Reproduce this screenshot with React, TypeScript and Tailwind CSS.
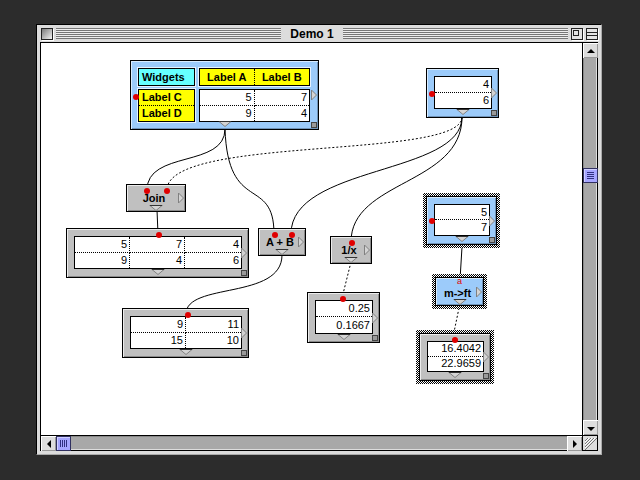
import React from "react";
import clsx from "clsx";

const sans = "font-['Liberation_Sans',Arial,sans-serif]";

function Dot({ pos }: { pos: string }) {
  return <span className={clsx("absolute w-[6px] h-[6px] rounded-full bg-[#e00000]", pos)} />;
}

function RightTab() {
  return (
    <svg width="6" height="11" viewBox="0 0 6 11" className="absolute right-[1px] top-1/2 -translate-y-1/2">
      <path d="M0.5 0.5 L5.5 5.5 L0.5 10.5 Z" fill="#d4d4d4" stroke="#808080" />
    </svg>
  );
}

function DownTab({ pos = "bottom-[2px]" }: { pos?: string }) {
  return (
    <svg width="13" height="6" viewBox="0 0 13 6" className={clsx("absolute left-1/2 -translate-x-1/2", pos)}>
      <path d="M0.5 0.5 L12.5 0.5 L6.5 5.5 Z" fill="#d4d4d4" stroke="#808080" />
      <path d="M0 0.5 H13" stroke="#333" />
    </svg>
  );
}

function Grow() {
  return <span className="absolute right-[1px] bottom-[1px] w-[6px] h-[6px] border border-[#444] bg-[#9a9a9a]" />;
}

function Frame({
  pos,
  tone,
  selected,
  children,
}: {
  pos: string;
  tone: "blue" | "gray";
  selected?: boolean;
  children: React.ReactNode;
}) {
  const body = (
    <div
      className={clsx(
        "relative w-full h-full border border-black flex flex-col",
        tone === "blue"
          ? "bg-[#9ccbfa] shadow-[inset_1px_1px_0_#d8ecff,inset_-1px_-1px_0_#6f93b8]"
          : "bg-[#c0c0c0] shadow-[inset_1px_1px_0_#ececec,inset_-1px_-1px_0_#8a8a8a]"
      )}
    >
      {children}
    </div>
  );
  if (selected) {
    return (
      <div
        className={clsx(
          "absolute p-[3px] bg-[repeating-conic-gradient(#000_0_25%,#fff_0_50%)] bg-[length:2px_2px] bg-size-[2px_2px]",
          pos
        )}
      >
        {body}
      </div>
    );
  }
  return <div className={clsx("absolute", pos)}>{body}</div>;
}

function Cells({ rows, cols }: { rows: string[][]; cols: string }) {
  return (
    <div className={clsx("grid auto-rows-fr flex-1 bg-white border border-black", cols)}>
      {rows.map((r, i) =>
        r.map((v, j) => (
          <div
            key={`${i}-${j}`}
            className={clsx(
              "flex items-center justify-end pr-[2px] text-[11px] leading-none text-black",
              j < r.length - 1 && "border-r border-dotted border-black",
              i < rows.length - 1 && "border-b border-dotted border-black"
            )}
          >
            {v}
          </div>
        ))
      )}
    </div>
  );
}

function DataNode({
  pos,
  tone,
  selected,
  rows,
  cols,
  dot,
}: {
  pos: string;
  tone: "blue" | "gray";
  selected?: boolean;
  rows: string[][];
  cols: string;
  dot: string;
}) {
  return (
    <Frame pos={pos} tone={tone} selected={selected}>
      <div className="flex-1 flex pt-[7px] pl-[7px] pr-[6px] pb-[8px]">
        <Cells rows={rows} cols={cols} />
      </div>
      <Dot pos={dot} />
      <RightTab />
      <DownTab />
      <Grow />
    </Frame>
  );
}

function OpNode({
  pos,
  tone,
  selected,
  label,
  dots,
  mark,
}: {
  pos: string;
  tone: "blue" | "gray";
  selected?: boolean;
  label: string;
  dots: string[];
  mark?: boolean;
}) {
  return (
    <Frame pos={pos} tone={tone} selected={selected}>
      <DownTab pos="bottom-[0px]" />
      <div
        className={clsx(
          "relative pr-[4px] text-center text-[11px] font-bold leading-[11px] whitespace-nowrap",
          mark ? "pt-[10px]" : "pt-[8px]"
        )}
      >
        {label}
      </div>
      {dots.map((d) => (
        <Dot key={d} pos={d} />
      ))}
      {mark && (
        <span className="absolute left-1/2 -translate-x-1/2 top-[-1px] text-[9px] leading-[9px] text-[#e00000]">a</span>
      )}
      <RightTab />
    </Frame>
  );
}

function YellowBox({ className, children }: { className?: string; children: React.ReactNode }) {
  return (
    <div className={clsx("border border-black shadow-[0_0_0_1px_#e6f2ff] text-[11px] font-bold leading-none", className)}>
      {children}
    </div>
  );
}

function WidgetsNode() {
  return (
    <Frame pos="left-[89px] top-[17px] w-[189px] h-[70px]" tone="blue">
      <div className="grid grid-cols-[57px_111px] grid-rows-[18px_33px] gap-x-[4px] gap-y-[3px] pt-[7px] pl-[7px]">
        <YellowBox className="bg-[#66ffff] flex items-center pl-[3px]">Widgets</YellowBox>
        <YellowBox className="bg-[#ffff00] grid grid-cols-2">
          <div className="flex items-center justify-center border-r border-dotted border-black">Label A</div>
          <div className="flex items-center justify-center">Label B</div>
        </YellowBox>
        <YellowBox className="bg-[#ffff00] grid grid-rows-2">
          <div className="flex items-center pl-[3px] border-b border-dotted border-black">Label C</div>
          <div className="flex items-center pl-[3px]">Label D</div>
        </YellowBox>
        <div className="flex">
          <Cells rows={[["5", "7"], ["9", "4"]]} cols="grid-cols-2" />
        </div>
      </div>
      <Dot pos="left-[2px] top-[33px]" />
      <RightTab />
      <DownTab />
      <Grow />
    </Frame>
  );
}

function Wires() {
  return (
    <svg className="absolute inset-0" width="542" height="392" viewBox="41 43 542 392" fill="none">
      <g stroke="#000" strokeWidth="1">
        <path d="M225 129 C225 168 147 150 147 190" />
        <path d="M225 129 C228 215 274 175 274 234" />
        <path d="M157 210 L158 234" />
        <path d="M282 255 C282 300 186 282 186 314" />
        <path d="M462 247 L460 280" />
        <path d="M462 117 C462 175 291 165 291 234" />
        <path d="M462 117 C462 185 351 180 351 242" />
      </g>
      <g stroke="#000" strokeWidth="1" strokeDasharray="2 2">
        <path d="M462 117 C462 160 167 135 167 190" />
        <path d="M351 262 L342 298" />
        <path d="M459 308 L453 337" />
      </g>
    </svg>
  );
}

function Arrow({ dir }: { dir: "up" | "down" | "left" | "right" }) {
  const d = {
    up: "M3 9 L11 9 L7 5 Z",
    down: "M3 6 L11 6 L7 10 Z",
    left: "M9 3 L9 11 L5 7 Z",
    right: "M5 3 L5 11 L9 7 Z",
  }[dir];
  return (
    <div className="w-[15px] h-[15px] bg-[#dddddd] shadow-[inset_1px_1px_0_#fff,inset_-1px_-1px_0_#999] flex items-center justify-center shrink-0">
      <svg width="14" height="14" viewBox="0 0 14 14">
        <path d={d} fill="#000" />
      </svg>
    </div>
  );
}

function Thumb({ vertical }: { vertical?: boolean }) {
  return (
    <div className="w-[15px] h-[15px] bg-[#a6a6ff] border border-[#303060] shadow-[inset_1px_1px_0_#d0d0ff] flex items-center justify-center shrink-0">
      <svg width="9" height="9" viewBox="0 0 9 9">
        {vertical
          ? [1, 3, 5, 7].map((y) => <path key={y} d={`M1 ${y + 0.5} H8`} stroke="#303080" />)
          : [1, 3, 5, 7].map((x) => <path key={x} d={`M${x + 0.5} 1 V8`} stroke="#303080" />)}
      </svg>
    </div>
  );
}

export default function App() {
  return (
    <div className={clsx("w-[640px] h-[480px] bg-[#2c2c2c] pt-[24px] pl-[36px] overflow-hidden", sans)}>
      <div className="w-[566px] h-[431px] bg-[#dcdcdc] border-t border-l border-black border-r border-b border-r-[#aaaaaa] border-b-[#aaaaaa] flex flex-col">
        {/* title bar */}
        <div className="h-[17px] flex items-center pl-[4px] pr-[3px] gap-[3px]">
          <div className="w-[12px] h-[12px] border border-[#222] bg-[linear-gradient(135deg,#7a7a7a,#f4f4f4)] shadow-[1px_1px_0_#fff]" />
          <div className="flex-1 h-[11px] bg-[repeating-linear-gradient(#777_0_1px,#eeeeee_1px_2px)]" />
          <div className="px-[6px] text-[12px] font-bold leading-none text-black">Demo 1</div>
          <div className="flex-1 h-[11px] bg-[repeating-linear-gradient(#777_0_1px,#eeeeee_1px_2px)]" />
          <div className="w-[12px] h-[12px] border border-[#222] bg-[#e4e4e4] shadow-[1px_1px_0_#fff] relative">
            <div className="absolute left-[1px] top-[1px] w-[6px] h-[6px] border border-[#222]" />
          </div>
          <div className="w-[12px] h-[12px] border border-[#222] bg-[#e4e4e4] shadow-[1px_1px_0_#fff] flex flex-col justify-center gap-[2px]">
            <div className="h-[1px] bg-[#222]" />
            <div className="h-[1px] bg-[#222]" />
          </div>
        </div>
        {/* content frame */}
        <div className="flex-1 px-[3px] pb-[3px] flex">
          <div className="flex-1 border border-black grid grid-cols-[1fr_15px] grid-rows-[1fr_15px]">
            <div className="relative bg-white overflow-hidden">
              <Wires />
              <WidgetsNode />
              <DataNode
                pos="left-[385px] top-[25px] w-[73px] h-[50px]"
                tone="blue"
                rows={[["4"], ["6"]]}
                cols="grid-cols-1"
                dot="left-[2px] top-[22px]"
              />
              <OpNode pos="left-[85px] top-[141px] w-[60px] h-[28px]" tone="gray" label="Join" dots={["left-[17px] top-[3px]", "left-[37px] top-[3px]"]} />
              <DataNode
                pos="left-[25px] top-[185px] w-[183px] h-[50px]"
                tone="gray"
                rows={[["5", "7", "4"], ["9", "4", "6"]]}
                cols="grid-cols-[55px_55px_1fr]"
                dot="left-[89px] top-[3px]"
              />
              <OpNode pos="left-[217px] top-[185px] w-[48px] h-[28px]" tone="gray" label="A + B" dots={["left-[13px] top-[3px]", "left-[30px] top-[3px]"]} />
              <OpNode pos="left-[289px] top-[193px] w-[42px] h-[28px]" tone="gray" label="1/x" dots={["left-[18px] top-[3px]"]} />
              <DataNode
                pos="left-[81px] top-[265px] w-[127px] h-[50px]"
                tone="gray"
                rows={[["9", "11"], ["15", "10"]]}
                cols="grid-cols-[55px_1fr]"
                dot="left-[62px] top-[3px]"
              />
              <DataNode
                pos="left-[266px] top-[249px] w-[73px] h-[51px]"
                tone="gray"
                rows={[["0.25"], ["0.1667"]]}
                cols="grid-cols-1"
                dot="left-[32px] top-[3px]"
              />
              <DataNode
                pos="left-[382px] top-[150px] w-[77px] h-[55px]"
                tone="blue"
                selected
                rows={[["5"], ["7"]]}
                cols="grid-cols-1"
                dot="left-[2px] top-[21px]"
              />
              <OpNode pos="left-[391px] top-[231px] w-[55px] h-[35px]" tone="blue" selected label="m->ft" dots={[]} mark />
              <DataNode
                pos="left-[375px] top-[287px] w-[78px] h-[54px]"
                tone="gray"
                selected
                rows={[["16.4042"], ["22.9659"]]}
                cols="grid-cols-1"
                dot="left-[32px] top-[3px]"
              />
            </div>
            {/* vertical scrollbar */}
            <div className="border-l border-black bg-[#a8a8a8] shadow-[inset_1px_0_0_#888,inset_-1px_0_0_#ddd] flex flex-col">
              <Arrow dir="up" />
              <div className="h-[110px]" />
              <Thumb vertical />
              <div className="flex-1" />
              <Arrow dir="down" />
            </div>
            {/* horizontal scrollbar */}
            <div className="border-t border-black bg-[#a8a8a8] shadow-[inset_0_1px_0_#888,inset_0_-1px_0_#ddd] flex">
              <Arrow dir="left" />
              <Thumb />
              <div className="flex-1" />
              <Arrow dir="right" />
            </div>
            <div className="border-t border-l border-black bg-[#dddddd] flex items-center justify-center">
              <svg width="13" height="13" viewBox="0 0 13 13">
                {[4, 7, 10, 13].map((k) => (
                  <path key={k} d={`M${k} 1 L1 ${k}`} stroke="#777" />
                ))}
                {[5, 8, 11].map((k) => (
                  <path key={k} d={`M${k} 1 L1 ${k}`} stroke="#fff" />
                ))}
              </svg>
            </div>
          </div>
        </div>
      </div>
    </div>
  );
}
